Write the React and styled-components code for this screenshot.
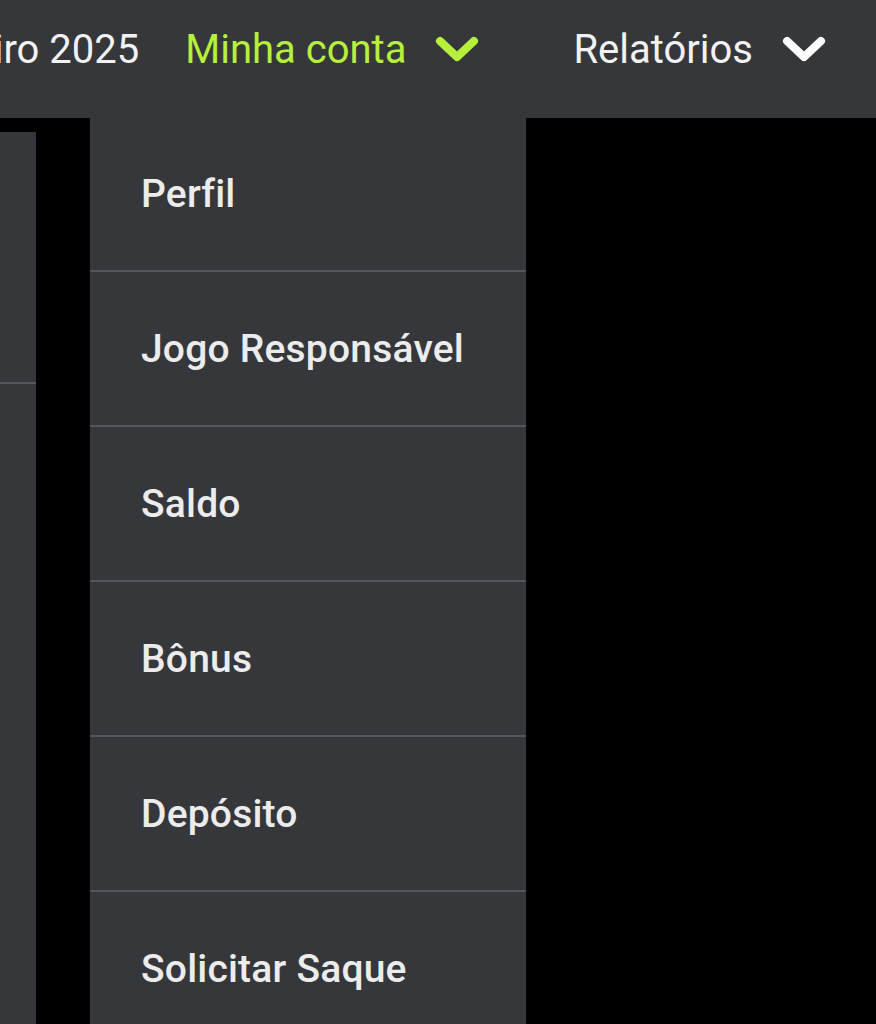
import React from 'react'
import styled, { createGlobalStyle } from 'styled-components'

const GlobalStyle = createGlobalStyle`
  html, body {
    margin: 0;
    padding: 0;
    background: #000;
    font-family: Roboto, "Liberation Sans", sans-serif;
  }
  #root {
    height: 1024px;
    overflow: hidden;
  }
`;

const Page = styled.div`
  display: flex;
  flex-direction: column;
  height: 1024px;
  background: #000;
`;

const Header = styled.header`
  height: 118px;
  box-sizing: border-box;
  flex-shrink: 0;
  background: #36373b;
  display: flex;
  align-items: center;
  justify-content: flex-end;
  overflow: hidden;
  padding: 0 50px 20px 0;
  white-space: nowrap;
`;

const NavItem = styled.div`
  display: flex;
  align-items: center;
  gap: 29px;
  margin-left: ${p => p.$gap || 0}px;
  color: ${p => (p.$active ? '#b6ef3c' : '#f2f2f2')};
  font-size: 40px;
  font-weight: 400;
  flex-shrink: 0;
`;

const Body = styled.div`
  flex: 1;
  display: flex;
  min-height: 0;
`;

const SidePanel = styled.div`
  width: 36px;
  margin-top: 14px;
  background: #36373b;
  flex-shrink: 0;
`;

const SideRow = styled.div`
  height: 250px;
  border-bottom: 2px solid #55565b;
`;

const Dropdown = styled.nav`
  width: 436px;
  margin-left: 54px;
  background: #36373b;
  display: flex;
  flex-direction: column;
  flex-shrink: 0;
`;

const MenuItem = styled.a`
  display: flex;
  align-items: center;
  height: ${p => (p.$first ? 152 : 153)}px;
  flex-shrink: 0;
  padding-left: 51px;
  color: #ececec;
  font-size: 39px;
  font-weight: 500;
  letter-spacing: 0.2px;
  text-decoration: none;
  border-bottom: 2px solid #55565b;
  &:last-child {
    border-bottom: none;
  }
`;

const Chevron = ({ color }) => (
  <svg width="44" height="30" viewBox="0 0 44 30" fill="none">
    <path d="M5 7 L22 23 L39 7" stroke={color} strokeWidth="8" strokeLinecap="round" strokeLinejoin="round" />
  </svg>
);

const items = ['Perfil', 'Jogo Responsável', 'Saldo', 'Bônus', 'Depósito', 'Solicitar Saque'];

export default function App() {
  return (
    <>
      <GlobalStyle />
      <Page>
        <Header>
          <NavItem>Fevereiro 2025</NavItem>
          <NavItem $gap={46} $active>
            Minha conta <Chevron color="#b6ef3c" />
          </NavItem>
          <NavItem $gap={94}>
            Relatórios <Chevron color="#ffffff" />
          </NavItem>
        </Header>
        <Body>
          <SidePanel>
            <SideRow />
          </SidePanel>
          <Dropdown>
            {items.map((label, i) => (
              <MenuItem key={label} href="#" $first={i === 0}>
                {label}
              </MenuItem>
            ))}
          </Dropdown>
        </Body>
      </Page>
    </>
  );
}
